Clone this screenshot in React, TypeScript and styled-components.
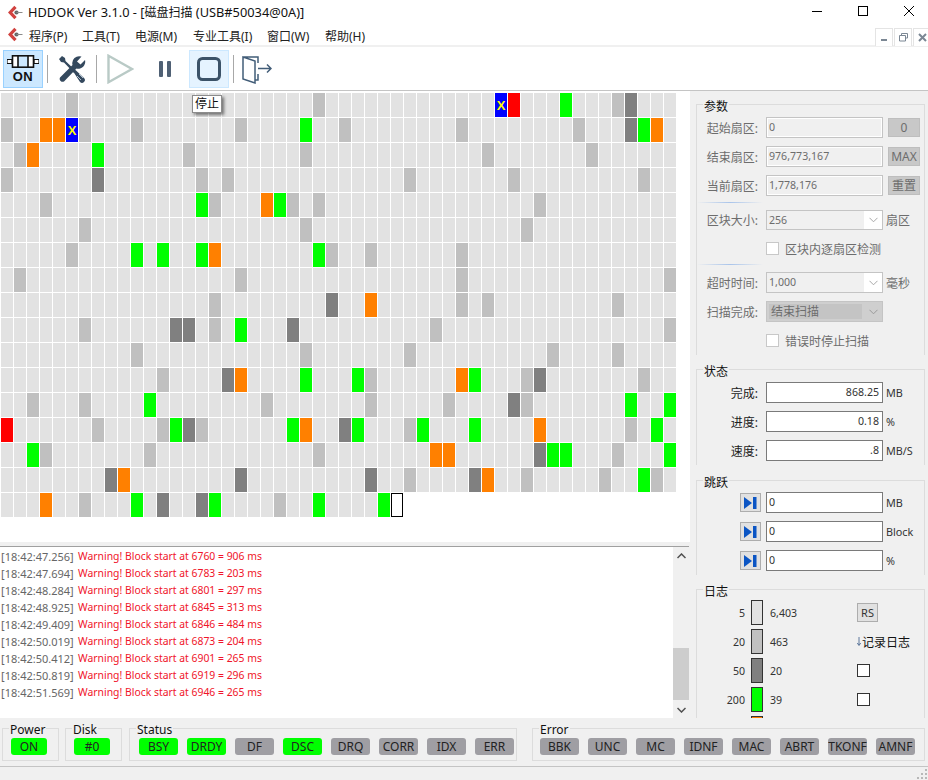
import React from 'react';
import styled, { createGlobalStyle } from 'styled-components';

const FONT = '"Noto Sans", "Noto Sans CJK SC", sans-serif';

const GlobalStyle = createGlobalStyle`
  html, body {
    margin: 0;
    padding: 0;
    background: #fff;
    overflow: hidden;
  }
  * { box-sizing: border-box; }
`;

const Window = styled.div`
  width: 928px;
  height: 780px;
  display: flex;
  flex-direction: column;
  font-family: ${FONT};
  font-size: 12px;
  color: #222;
  background: #fff;
  overflow: hidden;
`;

const TitleBar = styled.div`
  height: 24px;
  display: flex;
  align-items: center;
  padding-left: 8px;
  flex: none;
`;

const Title = styled.span`
  margin-left: 5px;
  font-size: 12.8px;
  color: #111;
  white-space: nowrap;
`;

const TitleCjk = styled.span`
  font-size: 12px;
`;

const WinControls = styled.div`
  margin-left: auto;
  margin-right: -4px;
  padding-bottom: 2px;
  display: flex;
  height: 24px;
  align-items: center;
`;

const WinBtn = styled.div`
  width: 46px;
  height: 22px;
  display: flex;
  align-items: center;
  justify-content: center;
`;

const MenuBar = styled.div`
  height: 23px;
  display: flex;
  align-items: center;
  padding-left: 8px;
  flex: none;
  border-bottom: 2px solid #f0f0f0;
`;

const MenuGap = styled.span`
  width: 6px;
  flex: none;
`;

const MenuItem = styled.span<{ $w: number }>`
  width: ${p => p.$w}px;
  padding-top: 2px;
  color: #222;
  white-space: nowrap;
`;

const MdiButtons = styled.div`
  margin-left: auto;
  margin-right: -3px;
  display: flex;
  gap: 1px;
  align-self: flex-start;
  margin-top: 4px;
`;

const MdiBtn = styled.div`
  width: 18px;
  height: 18px;
  background: #fff;
  border: 1px solid #e4e4e4;
  border-bottom: none;
  display: flex;
  align-items: center;
  justify-content: center;
`;

const Toolbar = styled.div`
  height: 44px;
  flex: none;
  display: flex;
  align-items: center;
  padding-left: 3px;
  border-bottom: 1px solid #c4c4c4;
`;

const ToolBtn = styled.div<{ $tone?: 'on' | 'hover' }>`
  position: relative;
  width: 40px;
  height: 38px;
  flex: none;
  display: flex;
  flex-direction: column;
  align-items: center;
  justify-content: center;
  background: ${p => (p.$tone === 'on' ? '#cce8ff' : p.$tone === 'hover' ? '#e5f3ff' : 'transparent')};
  border: 1px solid ${p => (p.$tone === 'on' ? '#99d1ff' : p.$tone === 'hover' ? '#cce8ff' : 'transparent')};
`;

const OnLabel = styled.span`
  margin-top: 3px;
  font-family: "Liberation Sans", sans-serif;
  font-weight: 700;
  font-size: 13px;
  line-height: 12px;
  color: #111;
  letter-spacing: 0.6px;
`;

const ToolSep = styled.div<{ $l: number }>`
  width: 1px;
  height: 28px;
  flex: none;
  background: #a8a8a8;
  margin-left: ${p => p.$l}px;
`;

const ToolIcon = styled.svg<{ $l: number }>`
  flex: none;
  margin-left: ${p => p.$l}px;
  display: block;
`;

const StopWrap = styled.div`
  margin-left: 17px;
  flex: none;
`;

const Tooltip = styled.div`
  position: absolute;
  left: 2px;
  top: 44px;
  width: 30px;
  height: 18px;
  background: #fff;
  border: 1px solid #8c8c8c;
  box-shadow: 2px 2px 3px rgba(0, 0, 0, 0.5);
  font-size: 12px;
  line-height: 16px;
  text-align: center;
  color: #111;
  z-index: 5;
`;

const Body = styled.div`
  flex: none;
  height: 627px;
  display: flex;
`;

const LeftCol = styled.div`
  width: 690px;
  flex: none;
  display: flex;
  flex-direction: column;
  background: #f0f0f0;
`;

const GridPane = styled.div`
  height: 451px;
  flex: none;
  background: #fff;
  padding: 2px 0 0 1px;
`;

const BlockGrid = styled.div`
  display: grid;
  grid-template-columns: repeat(52, 12px);
  grid-auto-rows: 24px;
  gap: 1px;
`;

type Kind = 'n' | 'g' | 'd' | 'G' | 'o' | 'r' | 'x' | 'c';

const CELL_BG: Record<Kind, string> = {
  n: '#e2e2e2',
  g: '#c0c0c0',
  d: '#808080',
  G: '#00ff00',
  o: '#ff8000',
  r: '#ff0000',
  x: '#0000ff',
  c: '#ffffff',
};

const Cell = styled.div<{ $k: Kind }>`
  background: ${p => CELL_BG[p.$k]};
  border: ${p => (p.$k === 'c' ? '1px solid #000' : 'none')};
  display: flex;
  align-items: center;
  justify-content: center;
  color: #ffff00;
  font-family: "Liberation Sans", sans-serif;
  font-weight: 700;
  font-size: 13px;
`;

const LogPane = styled.div`
  margin-top: 4px;
  margin-right: 1px;
  flex: 1;
  min-height: 0;
  display: flex;
  background: #fff;
  border-top: 1px solid #a0a0a0;
`;

const LogLines = styled.div`
  flex: 1;
  padding: 1px 0 0 1px;
  line-height: 17px;
  white-space: nowrap;
`;

const LogLine = styled.div`
  display: flex;
`;

const Stamp = styled.span`
  width: 77px;
  flex: none;
  font-size: 11px;
  color: #666;
`;

const Warn = styled.span`
  font-size: 10.4px;
  color: #f0142a;
`;

const ScrollBar = styled.div`
  width: 16px;
  flex: none;
  background: #f0f0f0;
  display: flex;
  flex-direction: column;
  align-items: stretch;
`;

const ScrollArrow = styled.div`
  height: 17px;
  flex: none;
  display: flex;
  align-items: center;
  justify-content: center;
`;

const ScrollTrack = styled.div`
  flex: 1;
  padding-top: 84px;
`;

const ScrollThumb = styled.div`
  height: 52px;
  background: #cdcdcd;
`;

const RightPanel = styled.div`
  width: 238px;
  flex: none;
  background: #f0f0f0;
  padding: 5px 3px 0 6px;
  overflow: hidden;
`;

const Group = styled.fieldset<{ $h: number; $t?: number }>`
  margin: ${p => p.$t ?? 0}px 0 0;
  padding: 0;
  min-width: 0;
  height: ${p => p.$h}px;
  border: 1px solid #dcdcdc;
  border-bottom: none;
`;

const Legend = styled.legend`
  margin-left: 6px;
  padding: 0 1px;
  height: 16px;
  line-height: 21px;
  font-size: 12px;
  color: #111;
`;

const Rows = styled.div<{ $t?: number }>`
  padding-top: ${p => p.$t ?? 5}px;
  display: flex;
  flex-direction: column;
`;

const Row = styled.div<{ $t?: number; $h?: number }>`
  display: flex;
  align-items: center;
  height: ${p => p.$h ?? 21}px;
  margin-top: ${p => p.$t ?? 0}px;
`;

const Label = styled.div<{ $dim?: boolean }>`
  width: 61px;
  margin-right: 8px;
  text-align: right;
  white-space: nowrap;
  color: ${p => (p.$dim ? '#6d6d6d' : '#222')};
`;

const Field = styled.div<{ $kind: 'off' | 'on'; $right?: boolean }>`
  width: 117px;
  height: 100%;
  flex: none;
  font-size: 10.6px;
  line-height: 19px;
  padding: 0 3px 0 2px;
  overflow: hidden;
  white-space: nowrap;
  text-align: ${p => (p.$right ? 'right' : 'left')};
  background: ${p => (p.$kind === 'off' ? '#f0f0f0' : '#fff')};
  color: ${p => (p.$kind === 'off' ? '#6d6d6d' : '#333')};
  border: 1px solid ${p => (p.$kind === 'off' ? '#c4c4c4' : '#7a7a7a')};
  box-shadow: ${p => (p.$kind === 'off' ? 'inset 0 0 0 1px #fff' : 'none')};
`;

const Unit = styled.span<{ $dim?: boolean; $latin?: boolean }>`
  margin-left: 3px;
  white-space: nowrap;
  font-size: ${p => (p.$latin ? '10.8px' : '12px')};
  color: ${p => (p.$dim ? '#6d6d6d' : '#333')};
`;

const SideBtn = styled.div`
  width: 32px;
  height: 19px;
  margin-left: 5px;
  flex: none;
  background: #c8c8c8;
  border: 1px solid #bebebe;
  color: #6d6d6d;
  line-height: 17px;
  text-align: center;
  white-space: nowrap;
`;

const BlueRule = styled.div<{ $t: number }>`
  width: 66px;
  height: 1px;
  margin-top: ${p => p.$t}px;
  background: linear-gradient(90deg, #f0f0f0, #a9c4ea 50%, #f0f0f0);
`;

const Combo = styled.div<{ $off?: boolean }>`
  width: 117px;
  height: 100%;
  flex: none;
  display: flex;
  align-items: stretch;
  border: 1px solid #c4c4c4;
  background: ${p => (p.$off ? '#cfcfcf' : '#f0f0f0')};
  color: #6d6d6d;
`;

const ComboText = styled.div<{ $off?: boolean }>`
  flex: 1;
  padding-left: 2px;
  margin: ${p => (p.$off ? '2px' : 0)};
  background: ${p => (p.$off ? '#c4c4c4' : 'transparent')};
  font-size: ${p => (p.$off ? '12px' : '10.6px')};
  line-height: ${p => (p.$off ? '15px' : '19px')};
`;

const ComboArrow = styled.div<{ $off?: boolean }>`
  width: 18px;
  flex: none;
  background: ${p => (p.$off ? '#cfcfcf' : '#fff')};
  display: flex;
  align-items: center;
  justify-content: center;
`;

const CheckRow = styled.div<{ $t: number }>`
  display: flex;
  align-items: center;
  height: 13px;
  margin: ${p => p.$t}px 0 0 69px;
  color: #6d6d6d;
  white-space: nowrap;
`;

const CheckBox = styled.div<{ $dim?: boolean }>`
  width: 13px;
  height: 13px;
  flex: none;
  background: #fff;
  border: 1px solid ${p => (p.$dim ? '#c8c8c8' : '#333')};
`;

const CheckText = styled.span`
  margin-left: 6px;
`;

const JumpRow = styled.div<{ $t?: number }>`
  display: flex;
  align-items: center;
  height: 21px;
  margin-top: ${p => p.$t ?? 0}px;
  padding-left: 43px;
`;

const JumpBtn = styled.div`
  width: 21px;
  height: 19px;
  margin-right: 5px;
  flex: none;
  background: #e1e1e1;
  border: 1px solid #adadad;
  display: flex;
  align-items: center;
  justify-content: center;
`;

const LogRows = styled.div`
  padding-top: 3px;
  display: flex;
  flex-direction: column;
  gap: 4px;
`;

const LogRow = styled.div`
  display: flex;
  align-items: center;
  height: 25px;
`;

const LogLimit = styled.div`
  width: 48px;
  text-align: right;
  margin-right: 6px;
  font-size: 10.6px;
  color: #333;
`;

const Swatch = styled.div<{ $c: string }>`
  width: 12px;
  height: 25px;
  flex: none;
  background: ${p => p.$c};
  border: 1px solid #333;
  margin-right: 7px;
`;

const LogCount = styled.div`
  width: 87px;
  font-size: 10.6px;
  color: #333;
`;

const RsBtn = styled.div`
  width: 21px;
  height: 19px;
  background: #e1e1e1;
  border: 1px solid #adadad;
  font-size: 11px;
  line-height: 17px;
  text-align: center;
  color: #333;
`;

const RecordLabel = styled.div`
  display: flex;
  align-items: center;
  color: #111;
  white-space: nowrap;
`;

const Arrow = styled.svg`
  flex: none;
  margin-right: 1px;
`;

const StatusStrip = styled.div`
  flex: none;
  height: 48px;
  background: #f0f0f0;
  display: flex;
  padding: 2px 0 0 2px;
`;

const PillGroup = styled.fieldset<{ $w: number; $l: number }>`
  margin: 0 0 0 ${p => p.$l}px;
  padding: 0;
  min-width: 0;
  width: ${p => p.$w}px;
  height: 41px;
  border: 1px solid #dcdcdc;
`;

const PillLegend = styled.legend`
  margin-left: 6px;
  padding: 0 1px;
  height: 16px;
  line-height: 19px;
  font-size: 12px;
  color: #111;
`;

const PillRow = styled.div<{ $pad: number }>`
  display: flex;
  gap: 9px;
  padding: 2px 0 0 ${p => p.$pad}px;
`;

const Pill = styled.div<{ $on?: boolean; $w?: number }>`
  width: ${p => p.$w ?? 39}px;
  height: 17px;
  flex: none;
  border-radius: 3px;
  background: ${p => (p.$on ? '#00ff00' : '#9f9ea3')};
  text-align: center;
  line-height: 17px;
  font-size: 12px;
  color: #222;
  white-space: nowrap;
  overflow: hidden;
`;

const StatusBar = styled.div`
  flex: 1;
  background: #f0f0f0;
  border-top: 1px solid #c4c4c4;
  display: flex;
  justify-content: flex-end;
  align-items: flex-end;
`;

const Logo = () => (
  <svg width="15" height="15" viewBox="0 0 15 15" style={{ flex: 'none' }}>
    <path d="M7.5 1.8 L2.2 7.5 L7.5 13.2" fill="none" stroke="#d1423f" strokeWidth="3.2" />
    <circle cx="8.5" cy="7.5" r="2.1" fill="#666" />
    <path d="M8.5 7.5 H14.5" stroke="#8a8a8a" strokeWidth="1" />
  </svg>
);

const Chevron = ({ color = '#a8a8a8' }: { color?: string }) => (
  <svg width="9" height="6" viewBox="0 0 9 6">
    <path d="M0.5 0.8 L4.5 4.8 L8.5 0.8" fill="none" stroke={color} strokeWidth="1" />
  </svg>
);

const JumpIcon = () => (
  <svg width="13" height="12" viewBox="0 0 13 12">
    <path d="M0 0 L8 6 L0 12 Z" fill="#0b55c4" />
    <rect x="9" y="0" width="3.5" height="12" fill="#0b55c4" />
  </svg>
);

// row data: kind + column, everything else is a normal block
const BLOCKS = [
  'g5 g24 x38 r39 G43 g47 d48',
  'g0 o3 o4 x5 g6 g10 g18 G23 g26 g35 g44 d48 G49 o50',
  'g1 o2 G7 g14 g23 g37 g45',
  'g0 d7 g15 g17 g31 g39 g49',
  'g3 G15 g16 o20 G21 g22 g24 g41',
  'g6 g23 g40',
  'g5 G10 G12 G15 o16 G24 g25 g28 g35',
  'g1 g18 g35 g51',
  'g16 d25 o28 g35 g37 g47',
  'g6 d13 d14 g16 G18 d22 g33 g51',
  'g10 g23 g31 g42 g47',
  'g12 d17 o18 G23 G27 g28 o35 G36 g40 d41 g49',
  'g2 g6 G11 g20 g28 g34 d39 g40 G48 G51',
  'r0 g7 g12 G13 d14 g15 G22 o23 d26 G27 g31 G32 G36 o41 g48 G50',
  'G2 g3 g11 g24 o33 o34 d41 G42 G43 g47 G51',
  'd8 o9 d18 d28 g31 d36 o37 g40 g46 G49 g50',
  'o3 g6 G10 d12 d15 G16 g21 G24 G29 c30',
];

const COLS = 52;

const buildCells = (): Kind[] => {
  const cells: Kind[] = [];
  BLOCKS.forEach((spec, r) => {
    const row: Kind[] = new Array(COLS).fill('n');
    spec.split(' ').forEach(tok => {
      row[Number(tok.slice(1))] = tok[0] as Kind;
    });
    // last row stops at the block being scanned
    cells.push(...(r === BLOCKS.length - 1 ? row.slice(0, 31) : row));
  });
  return cells;
};

const LOG = [
  ['18:42:47.256', 6760, 906],
  ['18:42:47.694', 6783, 203],
  ['18:42:48.284', 6801, 297],
  ['18:42:48.925', 6845, 313],
  ['18:42:49.409', 6846, 484],
  ['18:42:50.019', 6873, 204],
  ['18:42:50.412', 6901, 265],
  ['18:42:50.819', 6919, 296],
  ['18:42:51.569', 6946, 265],
];

const MENUS: [string, number][] = [
  ['程序(P)', 53],
  ['工具(T)', 53],
  ['电源(M)', 58],
  ['专业工具(I)', 74],
  ['窗口(W)', 58],
  ['帮助(H)', 60],
];

const STATUS: [string, boolean][] = [
  ['BSY', true],
  ['DRDY', true],
  ['DF', false],
  ['DSC', true],
  ['DRQ', false],
  ['CORR', false],
  ['IDX', false],
  ['ERR', false],
];

const ERRORS = ['BBK', 'UNC', 'MC', 'IDNF', 'MAC', 'ABRT', 'TKONF', 'AMNF'];

const App = () => {
  const cells = buildCells();
  return (
    <Window>
      <GlobalStyle />
      <TitleBar>
        <Logo />
        <Title>HDDOK Ver 3.1.0 - [<TitleCjk>磁盘扫描</TitleCjk> (USB#50034@0A)]</Title>
        <WinControls>
          <WinBtn>
            <svg width="10" height="10" viewBox="0 0 10 10"><path d="M0 5.5 H10" stroke="#000" /></svg>
          </WinBtn>
          <WinBtn>
            <svg width="10" height="10" viewBox="0 0 10 10"><rect x="0.5" y="0.5" width="9" height="9" fill="none" stroke="#000" /></svg>
          </WinBtn>
          <WinBtn>
            <svg width="10" height="10" viewBox="0 0 10 10"><path d="M0 0 L10 10 M10 0 L0 10" stroke="#000" /></svg>
          </WinBtn>
        </WinControls>
      </TitleBar>

      <MenuBar>
        <Logo />
        <MenuGap />
        {MENUS.map(([m, w]) => (
          <MenuItem key={m} $w={w}>{m}</MenuItem>
        ))}
        <MdiButtons>
          <MdiBtn>
            <svg width="9" height="9" viewBox="0 0 9 9"><rect x="1" y="6" width="6" height="2" fill="#7b8794" /></svg>
          </MdiBtn>
          <MdiBtn>
            <svg width="9" height="9" viewBox="0 0 9 9"><path d="M2.5 2.5 V0.5 H8.5 V5 H6.5 M0.5 2.5 H6.5 V8 H0.5 Z" fill="none" stroke="#7b8794" /></svg>
          </MdiBtn>
          <MdiBtn>
            <svg width="9" height="9" viewBox="0 0 9 9"><path d="M1 1 L8 8 M8 1 L1 8" stroke="#7b8794" strokeWidth="2" /></svg>
          </MdiBtn>
        </MdiButtons>
      </MenuBar>

      <Toolbar>
        <ToolBtn $tone="on">
          <svg width="32" height="13" viewBox="0 0 32 13">
            <path d="M0 4.5 H5 V8.5 H0 Z M27 4.5 H32 V8.5 H27 Z" fill="#fff" stroke="#111" strokeWidth="1.2" />
            <rect x="5.5" y="0.8" width="21" height="11.4" fill="#fff" stroke="#111" strokeWidth="1.6" />
            <rect x="11" y="0.8" width="10" height="11.4" fill="#cce8ff" stroke="#111" strokeWidth="1.6" />
          </svg>
          <OnLabel>ON</OnLabel>
        </ToolBtn>
        <ToolSep $l={4} />
        <ToolIcon $l={10} width="28" height="28" viewBox="0 0 28 28">
          <path d="M4 1 L1 4 L3 7 L6 7.5 L16 18 L18 16 L7.5 6 L7 3 Z" fill="#34495e" />
          <path d="M15.5 17 L17.5 15 L26 23 A2.8 2.8 0 0 1 22 27 Z" fill="#34495e" />
          <path d="M19 21 L23 25 M21 19 L25 23" stroke="#cfe0ee" strokeWidth="0.8" />
          <path d="M27 5 L22.5 9.5 L19 6.5 L23.5 1.6 A7 7 0 0 0 14.5 10 L2 22.5 A3 3 0 0 0 6 26.5 L18.5 13.5 A7 7 0 0 0 27 5 Z" fill="#34495e" />
        </ToolIcon>
        <ToolSep $l={10} />
        <ToolIcon $l={10} width="27" height="30" viewBox="0 0 27 30">
          <path d="M1.5 1.8 L25 15 L1.5 28.2 Z" fill="none" stroke="#b9cac6" strokeWidth="2.4" />
        </ToolIcon>
        <ToolIcon $l={24} width="14" height="16" viewBox="0 0 14 16">
          <rect x="1" y="0" width="4" height="16" rx="1" fill="#4f6074" />
          <rect x="9" y="0" width="4" height="16" rx="1" fill="#4f6074" />
        </ToolIcon>
        <StopWrap>
          <ToolBtn $tone="hover">
            <svg width="24" height="24" viewBox="0 0 24 24">
              <rect x="1.5" y="1.5" width="21" height="21" rx="4" fill="none" stroke="#3b5268" strokeWidth="3" />
            </svg>
            <Tooltip>停止</Tooltip>
          </ToolBtn>
        </StopWrap>
        <ToolSep $l={4} />
        <ToolIcon $l={8} width="30" height="30" viewBox="0 0 30 30">
          <path d="M1 3 L13 7 V29 L1 25 Z M1 3 H16 V9 M16 20 V26 H13" fill="none" stroke="#425d78" strokeWidth="1.5" />
          <path d="M16 14.5 H29 M25 10.5 L29 14.5 L25 18.5" fill="none" stroke="#425d78" strokeWidth="1.5" />
        </ToolIcon>
      </Toolbar>

      <Body>
        <LeftCol>
          <GridPane>
            <BlockGrid>
              {cells.map((k, i) => (
                <Cell key={i} $k={k}>{k === 'x' ? 'X' : null}</Cell>
              ))}
            </BlockGrid>
          </GridPane>
          <LogPane>
            <LogLines>
              {LOG.map(([t, b, ms]) => (
                <LogLine key={t}>
                  <Stamp>[{t}]</Stamp>
                  <Warn>Warning! Block start at {b} = {ms} ms</Warn>
                </LogLine>
              ))}
            </LogLines>
            <ScrollBar>
              <ScrollArrow>
                <svg width="9" height="6" viewBox="0 0 9 6"><path d="M0.5 5 L4.5 1 L8.5 5" fill="none" stroke="#505050" strokeWidth="1.5" /></svg>
              </ScrollArrow>
              <ScrollTrack><ScrollThumb /></ScrollTrack>
              <ScrollArrow>
                <svg width="9" height="6" viewBox="0 0 9 6"><path d="M0.5 1 L4.5 5 L8.5 1" fill="none" stroke="#505050" strokeWidth="1.5" /></svg>
              </ScrollArrow>
            </ScrollBar>
          </LogPane>
        </LeftCol>

        <RightPanel>
          <Group $h={259}>
            <Legend>参数</Legend>
            <Rows>
              <Row>
                <Label $dim>起始扇区:</Label>
                <Field $kind="off">0</Field>
                <SideBtn>0</SideBtn>
              </Row>
              <Row $t={8}>
                <Label $dim>结束扇区:</Label>
                <Field $kind="off">976,773,167</Field>
                <SideBtn>MAX</SideBtn>
              </Row>
              <Row $t={8}>
                <Label $dim>当前扇区:</Label>
                <Field $kind="off">1,778,176</Field>
                <SideBtn>重置</SideBtn>
              </Row>
              <BlueRule $t={6} />
              <Row $t={7} $h={20}>
                <Label $dim>区块大小:</Label>
                <Combo>
                  <ComboText>256</ComboText>
                  <ComboArrow><Chevron /></ComboArrow>
                </Combo>
                <Unit $dim>扇区</Unit>
              </Row>
              <CheckRow $t={12}>
                <CheckBox $dim />
                <CheckText>区块内逐扇区检测</CheckText>
              </CheckRow>
              <BlueRule $t={9} />
              <Row $t={7}>
                <Label $dim>超时时间:</Label>
                <Combo>
                  <ComboText>1,000</ComboText>
                  <ComboArrow><Chevron /></ComboArrow>
                </Combo>
                <Unit $dim>毫秒</Unit>
              </Row>
              <Row $t={8}>
                <Label $dim>扫描完成:</Label>
                <Combo $off>
                  <ComboText $off>结束扫描</ComboText>
                  <ComboArrow $off><Chevron color="#9a9a9a" /></ComboArrow>
                </Combo>
              </Row>
              <CheckRow $t={12}>
                <CheckBox $dim />
                <CheckText>错误时停止扫描</CheckText>
              </CheckRow>
            </Rows>
          </Group>

          <Group $h={104} $t={6}>
            <Legend>状态</Legend>
            <Rows>
              <Row>
                <Label>完成:</Label>
                <Field $kind="on" $right>868.25</Field>
                <Unit $latin>MB</Unit>
              </Row>
              <Row $t={8}>
                <Label>进度:</Label>
                <Field $kind="on" $right>0.18</Field>
                <Unit $latin>%</Unit>
              </Row>
              <Row $t={8}>
                <Label>速度:</Label>
                <Field $kind="on" $right>.8</Field>
                <Unit $latin>MB/S</Unit>
              </Row>
            </Rows>
          </Group>

          <Group $h={103} $t={7}>
            <Legend>跳跃</Legend>
            <Rows $t={4}>
              <JumpRow>
                <JumpBtn><JumpIcon /></JumpBtn>
                <Field $kind="on">0</Field>
                <Unit $latin>MB</Unit>
              </JumpRow>
              <JumpRow $t={8}>
                <JumpBtn><JumpIcon /></JumpBtn>
                <Field $kind="on">0</Field>
                <Unit $latin>Block</Unit>
              </JumpRow>
              <JumpRow $t={8}>
                <JumpBtn><JumpIcon /></JumpBtn>
                <Field $kind="on">0</Field>
                <Unit $latin>%</Unit>
              </JumpRow>
            </Rows>
          </Group>

          <Group $h={140} $t={6}>
            <Legend>日志</Legend>
            <LogRows>
              <LogRow>
                <LogLimit>5</LogLimit>
                <Swatch $c="#e2e2e2" />
                <LogCount>6,403</LogCount>
                <RsBtn>RS</RsBtn>
              </LogRow>
              <LogRow>
                <LogLimit>20</LogLimit>
                <Swatch $c="#c0c0c0" />
                <LogCount>463</LogCount>
                <RecordLabel>
                  <Arrow width="4" height="9" viewBox="0 0 4 9">
                    <path d="M2 0 V8 M0.3 6 L2 8.5 L3.7 6" fill="none" stroke="#4c6a92" strokeWidth="0.9" />
                  </Arrow>
                  记录日志
                </RecordLabel>
              </LogRow>
              <LogRow>
                <LogLimit>50</LogLimit>
                <Swatch $c="#808080" />
                <LogCount>20</LogCount>
                <CheckBox />
              </LogRow>
              <LogRow>
                <LogLimit>200</LogLimit>
                <Swatch $c="#00ff00" />
                <LogCount>39</LogCount>
                <CheckBox />
              </LogRow>
              <LogRow>
                <LogLimit />
                <Swatch $c="#ff8000" />
              </LogRow>
            </LogRows>
          </Group>
        </RightPanel>
      </Body>

      <StatusStrip>
        <PillGroup $w={57} $l={0}>
          <PillLegend>Power</PillLegend>
          <PillRow $pad={8}><Pill $on $w={36}>ON</Pill></PillRow>
        </PillGroup>
        <PillGroup $w={57} $l={6}>
          <PillLegend>Disk</PillLegend>
          <PillRow $pad={8}><Pill $on $w={36}>#0</Pill></PillRow>
        </PillGroup>
        <PillGroup $w={388} $l={7}>
          <PillLegend>Status</PillLegend>
          <PillRow $pad={9}>
            {STATUS.map(([s, on]) => (
              <Pill key={s} $on={on}>{s}</Pill>
            ))}
          </PillRow>
        </PillGroup>
        <PillGroup $w={393} $l={15}>
          <PillLegend>Error</PillLegend>
          <PillRow $pad={7}>
            {ERRORS.map(e => (
              <Pill key={e}>{e}</Pill>
            ))}
          </PillRow>
        </PillGroup>
      </StatusStrip>

      <StatusBar>
        <svg width="12" height="12" viewBox="0 0 12 12" style={{ display: 'block' }}>
          <path d="M9 1h2v2H9zM5 5h2v2H5zM9 5h2v2H9zM1 9h2v2H1zM5 9h2v2H5zM9 9h2v2H9z" fill="#b8b8b8" />
        </svg>
      </StatusBar>
    </Window>
  );
};

export default App;
